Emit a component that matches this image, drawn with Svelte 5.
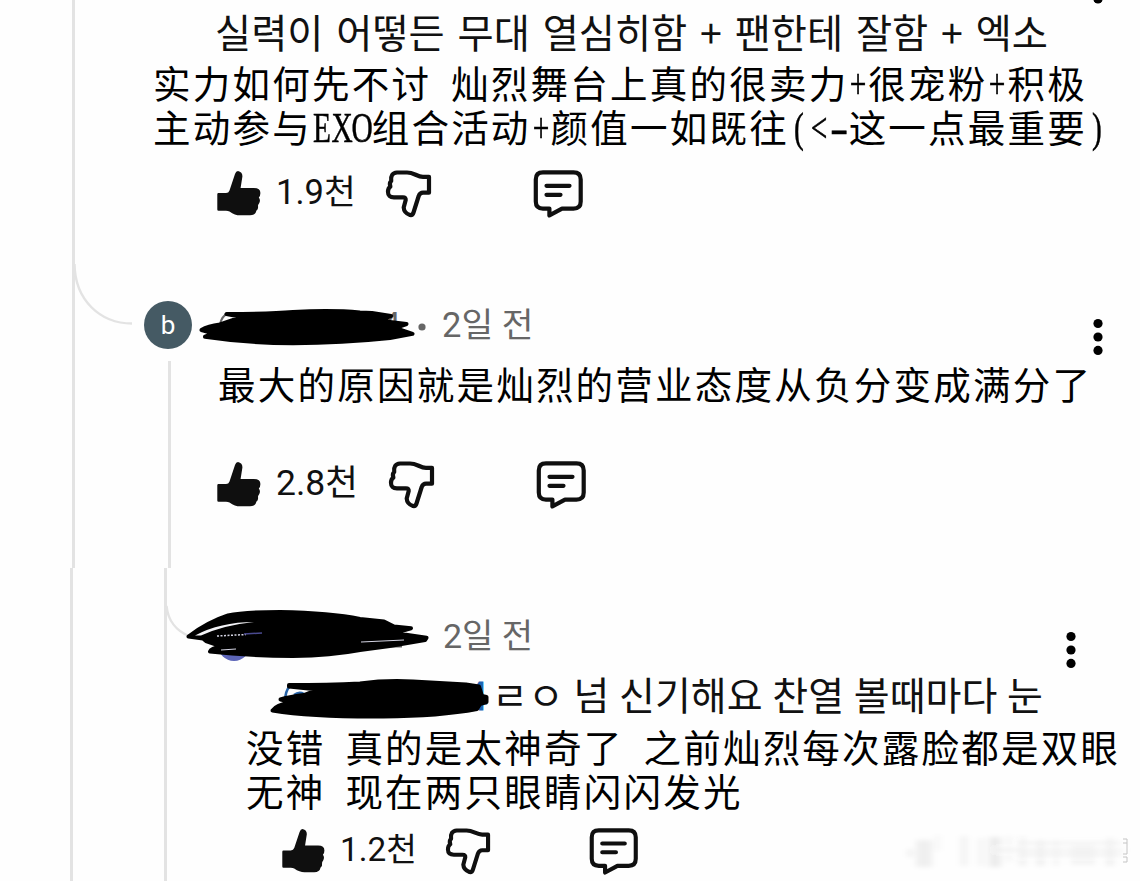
<script>
  const isHalf = (ch) => ch.charCodeAt(0) < 128;

  const first = {
    original: '실력이 어떻든 무대 열심히함 + 팬한테 잘함 + 엑소',
    lines: ['实力如何先不讨 灿烈舞台上真的很卖力+很宠粉+积极', '主动参与EXO组合活动+颜值一如既往(<-这一点最重要)'],
    likes: '1.9천'
  };

  const second = {
    age: '2일 전',
    lines: ['最大的原因就是灿烈的营业态度从负分变成满分了'],
    likes: '2.8천'
  };

  const third = {
    age: '2일 전',
    original: 'ㄹㅇ 넘 신기해요 찬열 볼때마다 눈',
    lines: ['没错 真的是太神奇了 之前灿烈每次露脸都是双眼', '无神 现在两只眼睛闪闪发光'],
    likes: '1.2천'
  };

  // x, y, width, height, opacity of each smear in the worn-out stamp
  const smears = [
    [2, 17, 4, 8, 0.07], [10, 8, 16, 27, 0.06], [29, 3, 5, 16, 0.03], [54, 4, 8, 30, 0.04],
    [72, 6, 6, 28, 0.04], [83, 5, 12, 30, 0.07], [100, 4, 6, 26, 0.03], [113, 5, 7, 29, 0.05],
    [130, 8, 9, 26, 0.05], [147, 8, 6, 26, 0.04], [165, 12, 24, 21, 0.04], [200, 6, 8, 28, 0.05]
  ];
</script>

{#snippet translation(lines)}
  <div class="translation">
    {#each lines as line}
      <p>{#each line as ch}{#if isHalf(ch)}<span class="half" class:dash={ch === '-'}>{ch}</span>{:else}{ch}{/if}{/each}</p>
    {/each}
  </div>
{/snippet}

{#snippet kebab()}
  <svg class="kebab" width="10" height="38" viewBox="0 0 10 38">
    <circle cx="5" cy="5.5" r="4.6" />
    <circle cx="5" cy="19" r="4.6" />
    <circle cx="5" cy="32.4" r="4.6" />
  </svg>
{/snippet}

{#snippet actions(likes, kind)}
  <div class="actions {kind}">
    <svg class="up" viewBox="0 0 44 48">
      <path d="M1.5 23H9Q11.6 23 12.5 20.5L18 4Q19 1 21 1Q25.6 2 25.4 6.5L23.6 18H37Q43.4 18 43.4 23Q43.4 26 41.8 27.5Q44 30 42 33.5Q40.8 35 41 36Q41.5 39 39.5 40.5Q38.5 45.3 33 45.3H23Q18 45.3 12.5 41.4Q11 40.8 9 40.8H1.5Q.3 40.8.3 39.5V24.3Q.3 23 1.5 23Z" />
    </svg>
    <span class="count">{likes}</span>
    <svg class="down line" viewBox="0 0 46 48">
      <path d="M11 2.5H21C28 2.5 31 6.8 37 6.8H43V22.7H37Q34 22.7 32.7 26L27.5 42.5Q26.6 45.5 24 45Q18 43 17.7 37.5L19.7 30Q20 27.3 17 27.3H8Q2 27.3 2 22Q2 18 4.4 16.6Q3 13 5.2 11Q4.2 3 11 2.5Z" />
    </svg>
    <svg class="reply line" viewBox="0 0 51 48">
      <path d="M10 2.4H40.5Q47.7 2.4 47.7 9.5V31.5Q47.7 38.6 40.5 38.6H29L16.4 45.4V38.6H10Q2.8 38.6 2.8 31.5V9.5Q2.8 2.4 10 2.4ZM13.5 15.8H36.5M13.5 24.8H27.5" />
    </svg>
  </div>
{/snippet}

<main>
  <section class="upper">
    <svg class="gutter" width="144" height="568" viewBox="0 0 144 568">
      <path d="M73.5 0V568" />
      <path class="thin" d="M74.5 264C75 300 100 323.5 132 323.5" />
    </svg>

    <div class="column">
      <article class="first">
        <div class="tail">
          <svg width="10" height="4" viewBox="0 0 10 4"><circle cx="5" cy="-1" r="4.6" /></svg>
        </div>
        <p class="original">{first.original}</p>
        {@render translation(first.lines)}
        {@render actions(first.likes, 'a')}
      </article>

      <article class="second">
        <header>
          <span class="avatar">b</span>
          <svg class="scribble" width="230" height="50" viewBox="0 0 230 50">
            <text class="leak" x="190" y="36" font-size="33">4</text>
            <path class="arc" d="M28 24Q30 16 36 13" />
            <path d="M34.500 14Q80 14 101 12Q140 10 168 12.500L180 13L199 16L190 19L198 22L214.500 24L203 28L220.500 33.800L198 38Q150 43 101 43.300Q55 43 13 36.700L22 33.500L9.500 30Q16 26 28 24.500L50 17Z" />
            <circle cx="230" cy="27" r="3.6" class="dot" />
          </svg>
          <span class="age">{second.age}</span>
          {@render kebab()}
        </header>
        <div class="body">
          <div class="rail"></div>
          <div>
            {@render translation(second.lines)}
            {@render actions(second.likes, 'b')}
          </div>
        </div>
      </article>
    </div>
  </section>

  <section class="lower">
    <svg class="gutter" width="186" height="313" viewBox="0 0 186 313">
      <path d="M71.500 0V313M165.500 0V313" />
      <path class="thin" d="M166.500 38C168 52 176 63 189 68" />
    </svg>

    <article class="third">
      <header>
        <svg class="scribble" width="244" height="56" viewBox="0 0 244 56">
          <circle cx="48" cy="37" r="16" class="disc" />
          <path class="arc" d="M205 38.500H216" />
          <path d="M2.500 28.500Q22 14 42 7.500Q58 4 94 4Q145 5 174 11L198 13.500L208 18.500L225 20.300L208 25L240.500 29.800L239 32Q207 38 174 42Q145 47.500 107 48Q60 47.500 24 43.500Q25 40 36 38.500L20 33L17 30.500Z" />
          <path class="crescent" d="M9 27.500Q34 14 68 14Q38 17 15 27.500Z" />
          <path class="gap dots" d="M31 28L60 26.500" />
          <path class="gap violet" d="M58 26L76 25" />
          <path class="gap" d="M35 42L50 41M175 34L218 32" />
        </svg>
        <span class="age">{third.age}</span>
        {@render kebab()}
      </header>
      <div class="mention">
        <svg class="scribble" width="222" height="46" viewBox="0 0 222 46">
          <text class="name" x="198" y="34" font-size="38">4</text>
          <path class="arc blue" d="M17 26Q17 15 22 10M26 19Q31 15 36 18" />
          <path d="M21 9Q60 9 92 7.500Q118 4 145 5.500L198 8.500L211 10.500L214 20L218.500 21V26L212 28L209 33Q172 40 115 40.500Q45 41 4.500 34.500Q8 29 24 26L12.500 23.500Q20 21 36 19L50 13.500L21 10.500Z" />
        </svg>
        <p class="original">{third.original}</p>
      </div>
      {@render translation(third.lines)}
      {@render actions(third.likes, 'c')}
    </article>
  </section>

  <svg class="stamp" width="230" height="42" viewBox="0 0 230 42">
    <g filter="url(#smudge)">
      {#each smears as [x, y, w, h, o]}
        <rect {x} {y} width={w} height={h} opacity={o} />
      {/each}
      <path d="M112 11H216M90 18H218M112 23H216" />
    </g>
    <path class="edge" d="M217 7H221V11H217M221 11V22H217M217 25H221V30H217" />
    <filter id="smudge"><feGaussianBlur stdDeviation="3 2" /></filter>
  </svg>
</main>

<style>
  :global(body) {
    background: #fefefe;
  }

  main {
    position: relative;
    width: 1140px;
    height: 881px;
    overflow: hidden;
    font-family: Roboto, 'Noto Sans CJK KR', sans-serif;
    color: #111;
  }

  p {
    margin: 0;
    white-space: pre;
  }

  svg {
    display: block;
    flex: none;
    overflow: visible;
  }

  section {
    display: flex;
  }

  .upper {
    height: 568px;
  }

  .lower {
    height: 313px;
  }

  .gutter path {
    fill: none;
    stroke: #e3e3e3;
    stroke-width: 3;
  }

  .gutter .thin {
    stroke-width: 2.4;
  }

  .first {
    height: 300px;
  }

  .tail {
    height: 6px;
    padding-left: 949px;
  }

  .original {
    height: 50px;
    line-height: 50px;
    font-family: 'Noto Sans CJK KR', sans-serif;
    font-size: 39.3px;
    word-spacing: 4px;
  }

  .first .original {
    padding-left: 71px;
  }

  .translation {
    font-family: 'Noto Sans CJK SC', sans-serif;
    font-size: 37.5px;
    letter-spacing: 2.22px;
    line-height: 44px;
    color: #000;
  }

  .translation p {
    height: 44px;
  }

  /* half-width characters, condensed to one 20px cell */
  .half {
    display: inline-block;
    width: 30px;
    margin: 0 -5.050px;
    font-family: 'Liberation Serif', serif;
    font-size: 42px;
    line-height: 40px;
    letter-spacing: 0;
    text-align: center;
    transform: scaleX(0.7);
    -webkit-text-stroke: 0.5px #000;
  }

  .half.dash {
    transform: scaleX(1.3);
  }

  .first .translation {
    height: 88px;
    padding: 4px 0 0 9px;
  }

  .actions {
    display: flex;
    align-items: flex-start;
    height: 48px;
  }

  .actions svg {
    fill: #0f0f0f;
  }

  .actions .line {
    fill: none;
    stroke: #0f0f0f;
    stroke-width: 4.2;
    stroke-linejoin: round;
    stroke-linecap: round;
  }

  .up {
    width: 44px;
  }

  .down {
    width: 46px;
  }

  .reply {
    width: 51px;
    margin-left: 101px;
  }

  .count {
    margin-left: 15px;
    font-size: 35px;
    line-height: 45px;
    white-space: nowrap;
  }

  .a {
    padding: 22px 0 0 73px;
  }

  .a .count {
    width: 110px;
    font-size: 34.5px;
  }

  .b {
    margin-left: -1px;
    padding-top: 56px;
  }

  .b .count {
    width: 113px;
    font-size: 35.5px;
  }

  header {
    display: flex;
    align-items: center;
  }

  .second header {
    height: 50px;
  }

  .avatar {
    width: 48px;
    height: 48px;
    border-radius: 50%;
    background: #455a64;
    color: #fff;
    font-size: 26px;
    line-height: 48px;
    text-align: center;
  }

  .scribble path {
    fill: #000;
    stroke: #000;
    stroke-width: 4;
    stroke-linejoin: round;
  }

  .scribble .arc {
    fill: none;
    stroke: #666;
    stroke-width: 2;
  }

  .scribble .blue {
    stroke: #2864a8;
    stroke-width: 2.5;
  }

  .scribble .gap {
    fill: none;
    stroke: #d5d5e4;
    stroke-width: 1;
  }

  .scribble .crescent {
    fill: #f4f4f8;
    stroke: none;
  }

  .scribble .dots {
    stroke-dasharray: 2 1.5;
    stroke-width: 1.5;
  }

  .scribble .violet {
    stroke: #4a4a90;
    stroke-width: 1.5;
  }

  .leak,
  .dot {
    fill: #666;
  }

  .name {
    fill: #1d64b4;
    stroke: #1d64b4;
  }

  .disc {
    fill: #5c65b8;
  }

  .age {
    width: 640px;
    margin-left: 20px;
    color: #666;
    font-size: 34.5px;
    line-height: 50px;
  }

  .second .kebab {
    margin: 24px 0 0 11px;
  }

  .body {
    display: flex;
  }

  .rail {
    width: 3px;
    height: 207px;
    margin: 11px 47px 0 24px;
    background: #e3e3e3;
  }

  .second .translation {
    padding: 11px 0 0 0;
  }

  .third {
    padding-top: 40px;
  }

  .third header {
    height: 56px;
  }

  .third .age {
    margin-left: 13px;
    width: 623px;
    font-size: 34px;
  }

  .third .kebab {
    margin-top: 28px;
  }

  .mention {
    display: flex;
    height: 50px;
    padding: 4px 0 0 82px;
  }

  .mention .scribble {
    margin-top: 8px;
  }

  .mention .original {
    padding-left: 2px;
    font-size: 39px;
    word-spacing: 1px;
  }

  .third .translation {
    height: 88px;
    padding: 6px 0 0 60px;
  }

  .c {
    height: 46px;
    padding: 16px 0 0 96px;
  }

  .c .up {
    width: 43px;
  }

  .c .count {
    width: 106px;
    font-size: 33.3px;
    line-height: 44px;
  }

  .c .down {
    width: 45px;
  }

  .c .reply {
    width: 50px;
    margin-left: 98px;
  }

  .stamp {
    position: absolute;
    left: 906px;
    top: 832px;
    fill: #000;
  }

  .stamp path {
    fill: none;
    stroke: #ddd;
  }

  .stamp .edge {
    stroke: #c4c4c4;
  }
</style>
